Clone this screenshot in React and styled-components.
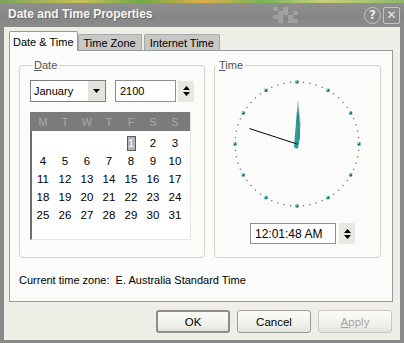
import React from 'react';
import styled, { createGlobalStyle } from 'styled-components';

// Component variables
const frameGray = '#8a8a8a';
const bodyBg = '#eeede6';
const panelBg = '#fbfbf9';
const groupLine = '#d3d3c8';
const teal = '#1a7f80';

const GlobalStyle = createGlobalStyle`
  html, body {
    margin: 0;
    padding: 0;
    background: ${frameGray};
  }
  body {
    font-family: Tahoma, "Liberation Sans", Arial, sans-serif;
    font-size: 11px;
    color: #000;
  }
`;

const Window = styled.div`
  width: 404px;
  height: 343px;
  display: flex;
  flex-direction: column;
  overflow: hidden;
  background: ${frameGray};
`;

const TaskStrip = styled.div`
  height: 3px;
  background: linear-gradient(90deg, #7fa35a 0%, #c9c15a 20%, #6fa84a 35%, #e0b04a 50%, #78b25a 65%, #c8d07a 80%, #8fb76a 100%);
`;

const TitleBar = styled.div`
  height: 24px;
  display: flex;
  align-items: center;
  padding: 0 4px 0 8px;
  background: linear-gradient(180deg, #8f8f8f 0%, #868686 60%, #8c8c8c 100%);
`;

const Title = styled.div`
  flex: 1;
  font-family: "Liberation Sans", Arial, sans-serif;
  font-weight: bold;
  font-size: 12px;
  color: #f4f4f4;
  text-shadow: 1px 1px 0 #6a6a6a;
  margin-top: -2px;
`;

const Checker = styled.div`
  display: grid;
  grid-template-columns: repeat(5, 5px);
  grid-auto-rows: 4px;
  margin-right: 64px;
  opacity: 0.5;
`;

const CheckCell = styled.span`
  background: ${(p) => (p.$on ? '#b8b8b8' : 'transparent')};
`;

const CaptionButton = styled.div`
  width: 17px;
  height: 17px;
  margin-left: 2px;
  display: flex;
  align-items: center;
  justify-content: center;
  color: #e8e8e8;
  font-family: "DejaVu Sans", sans-serif;
  font-weight: bold;
  font-size: 12px;
  border: 1px solid #c4c4c4;
  border-radius: ${(p) => (p.$round ? '50%' : '2px')};
  box-sizing: border-box;
`;

const Body = styled.div`
  flex: 1;
  margin: 0 4px 3px 4px;
  background: ${bodyBg};
  display: flex;
  flex-direction: column;
  padding: 3px 7px 0 5px;
`;

const TabRow = styled.div`
  display: flex;
  align-items: flex-end;
  height: 21px;
  position: relative;
  z-index: 1;
`;

const Tab = styled.div`
  height: ${(p) => (p.$active ? '20px' : '17px')};
  padding: 0 ${(p) => (p.$active ? '3px' : '5px')};
  margin-right: ${(p) => (p.$active ? '0' : '2px')};
  display: flex;
  align-items: center;
  background: ${(p) => (p.$active ? panelBg : '#c7c7c5')};
  border: 1px solid ${(p) => (p.$active ? '#919b9c' : '#a8a8a6')};
  border-bottom: ${(p) => (p.$active ? 'none' : '1px solid #919b9c')};
  border-radius: 2px 2px 0 0;
  box-sizing: border-box;
  white-space: nowrap;
`;

const Panel = styled.div`
  height: 252px;
  margin-top: -1px;
  background: ${panelBg};
  border: 1px solid #919b9c;
  box-sizing: border-box;
  display: flex;
  flex-direction: column;
  padding: 8px 11px 0 9px;
`;

const Groups = styled.div`
  display: flex;
  gap: 9px;
`;

const Group = styled.fieldset`
  margin: 0;
  width: ${(p) => p.$width}px;
  height: 199px;
  box-sizing: border-box;
  border: 1px solid ${groupLine};
  border-radius: 4px;
  padding: ${(p) => p.$pad};
  display: flex;
  flex-direction: column;
  align-items: ${(p) => p.$align || 'stretch'};
`;

const Legend = styled.legend`
  padding: 0 2px;
  margin-left: 2px;
  color: #555;
  font-size: 11px;
`;

const Row = styled.div`
  display: flex;
  align-items: center;
  gap: ${(p) => p.$gap || 0}px;
`;

const Combo = styled.div`
  width: 76px;
  height: 22px;
  box-sizing: border-box;
  border: 1px solid #7f7f7f;
  background: #fff;
  display: flex;
  align-items: center;
  padding-left: 3px;
`;

const ComboText = styled.span`
  flex: 1;
`;

const ComboArrow = styled.div`
  width: 17px;
  height: 20px;
  background: #e4e4de;
  display: flex;
  align-items: center;
  justify-content: center;
`;

const Field = styled.div`
  width: ${(p) => p.$width}px;
  height: ${(p) => p.$height || 21}px;
  box-sizing: border-box;
  border: 1px solid #8f8f8f;
  background: #fff;
  display: flex;
  align-items: center;
  padding-left: 4px;
  font-size: ${(p) => p.$size || 11}px;
`;

const Spinner = styled.div`
  width: 16px;
  height: 21px;
  background: #e8e8e2;
  display: flex;
  flex-direction: column;
  align-items: center;
  justify-content: center;
  gap: 2px;
`;

const Calendar = styled.div`
  margin-top: 10px;
  width: 161px;
  height: 128px;
  box-sizing: border-box;
  background: #fff;
  border-left: 2px solid #6e6e6e;
  border-right: 1px solid #e6e6e6;
  border-bottom: 1px solid #e6e6e6;
`;

const CalHead = styled.div`
  display: grid;
  grid-template-columns: repeat(7, 22px);
  height: 19px;
  align-items: center;
  background: #7b7b7b;
  color: #a9a9a9;
  margin-left: -2px;
  padding-left: 2px;
  font-size: 11px;
`;

const CalGrid = styled.div`
  display: grid;
  grid-template-columns: repeat(7, 22px);
  grid-auto-rows: 18px;
  padding-top: 3px;
  font-size: 11.5px;
`;

const CalCell = styled.div`
  display: flex;
  align-items: center;
  justify-content: center;
`;

const Today = styled.span`
  display: inline-block;
  width: 7px;
  height: 13px;
  line-height: 13px;
  text-align: center;
  background: #b4b4b4;
  border: 1px solid #5a5a5a;
  color: #fff;
  font-size: 11px;
`;

const ClockWrap = styled.div`
  margin-top: 3px;
  margin-right: 2px;
`;

const TimeRow = styled.div`
  display: flex;
  align-items: center;
  gap: 3px;
  margin-top: 11px;
  margin-left: 10px;
`;

const ZoneLine = styled.div`
  margin-top: 16px;
  padding-left: 0;
  font-size: 11px;
`;

const ButtonRow = styled.div`
  display: flex;
  justify-content: flex-end;
  gap: 7px;
  padding-top: 8px;
  padding-right: 1px;
`;

const Button = styled.div`
  width: 74px;
  height: 23px;
  box-sizing: border-box;
  display: flex;
  align-items: center;
  justify-content: center;
  border: ${(p) => (p.$default ? '2px solid #8d8d8d' : '1px solid #9a9a9a')};
  border-radius: 3px;
  background: linear-gradient(180deg, #fbfbf9 0%, #f0f0ea 70%, #e2e2dc 100%);
  color: ${(p) => (p.$disabled ? '#a6a6a0' : '#000')};
  border-color: ${(p) => (p.$disabled ? '#c8c8c2' : undefined)};
  font-size: 11.5px;
`;

const Underline = styled.span`
  text-decoration: underline;
`;

const Arrow = ({ up }) => (
  <svg width="7" height="4" viewBox="0 0 7 4">
    <polygon points={up ? '0,4 7,4 3.5,0' : '0,0 7,0 3.5,4'} fill="#000" />
  </svg>
);

function Clock() {
  const cx = 65;
  const cy = 64;
  const r = 62;
  const marks = [];
  for (let i = 0; i < 60; i++) {
    const a = (i * 6 * Math.PI) / 180;
    const x = cx + r * Math.sin(a);
    const y = cy - r * Math.cos(a);
    if (i % 5 === 0) {
      marks.push(<rect key={i} x={x - 1.5} y={y - 1.5} width="3" height="3" fill="#0f6f72" />);
      marks.push(<rect key={'h' + i} x={x - 1.5} y={y - 1.5} width="1.5" height="1.5" fill="#7fe0e6" />);
    } else {
      marks.push(<rect key={i} x={x - 0.6} y={y - 0.6} width="1.2" height="1.2" fill="#666" />);
    }
  }
  const sa = (48 * 6 * Math.PI) / 180;
  const sx = cx + 50 * Math.sin(sa);
  const sy = cy - 50 * Math.cos(sa);
  return (
    <svg width="130" height="130" viewBox="0 0 130 130">
      {marks}
      <polygon points={`${cx + 1},${cy + 4} ${cx + 4},${cy - 20} ${cx + 2},${cy - 36} ${cx - 1},${cy - 18}`} fill="#9a9a9a" opacity="0.6" />
      <polygon points={`${cx - 2},${cy + 4} ${cx + 1},${cy - 44} ${cx + 3},${cy - 10} ${cx + 1},${cy + 4}`} fill={teal} />
      <polygon points={`${cx - 3},${cy + 3} ${cx},${cy - 34} ${cx + 3},${cy - 6} ${cx},${cy + 5}`} fill="#2a9a96" />
      <line x1={cx} y1={cy} x2={sx} y2={sy} stroke="#000" strokeWidth="1" />
    </svg>
  );
}

const weekDays = ['M', 'T', 'W', 'T', 'F', 'S', 'S'];
const days = [null, null, null, null];
for (let d = 1; d <= 31; d++) days.push(d);

const checker = [1, 0, 1, 0, 0, 0, 1, 1, 0, 1, 1, 1, 0, 1, 0, 0, 1, 0, 1, 1];

export default function App() {
  return (
    <Window>
      <GlobalStyle />
      <TaskStrip />
      <TitleBar>
        <Title>Date and Time Properties</Title>
        <Checker>
          {checker.map((c, i) => (
            <CheckCell key={i} $on={c} />
          ))}
        </Checker>
        <CaptionButton $round>?</CaptionButton>
        <CaptionButton>✕</CaptionButton>
      </TitleBar>
      <Body>
        <TabRow>
          <Tab $active>Date &amp; Time</Tab>
          <Tab>Time Zone</Tab>
          <Tab>Internet Time</Tab>
        </TabRow>
        <Panel>
          <Groups>
            <Group $width={184} $pad="9px 10px 0 10px">
              <Legend>
                <Underline>D</Underline>ate
              </Legend>
              <Row $gap={9}>
                <Combo>
                  <ComboText>January</ComboText>
                  <ComboArrow>
                    <Arrow />
                  </ComboArrow>
                </Combo>
                <Row $gap={2}>
                  <Field $width={61} $height={22}>2100</Field>
                  <Spinner>
                    <Arrow up />
                    <Arrow />
                  </Spinner>
                </Row>
              </Row>
              <Calendar>
                <CalHead>
                  {weekDays.map((w, i) => (
                    <CalCell key={i}>{w}</CalCell>
                  ))}
                </CalHead>
                <CalGrid>
                  {days.map((d, i) => (
                    <CalCell key={i}>{d === 1 ? <Today>1</Today> : d}</CalCell>
                  ))}
                </CalGrid>
              </Calendar>
            </Group>
            <Group $width={171} $pad="6px 0 0 0" $align="center">
              <Legend>
                <Underline>T</Underline>ime
              </Legend>
              <ClockWrap>
                <Clock />
              </ClockWrap>
              <TimeRow>
                <Field $width={86} $size={12}>12:01:48 AM</Field>
                <Spinner>
                  <Arrow up />
                  <Arrow />
                </Spinner>
              </TimeRow>
            </Group>
          </Groups>
          <ZoneLine>Current time zone:&nbsp; E. Australia Standard Time</ZoneLine>
        </Panel>
        <ButtonRow>
          <Button $default>OK</Button>
          <Button>Cancel</Button>
          <Button $disabled>
            <Underline>A</Underline>pply
          </Button>
        </ButtonRow>
      </Body>
    </Window>
  );
}
